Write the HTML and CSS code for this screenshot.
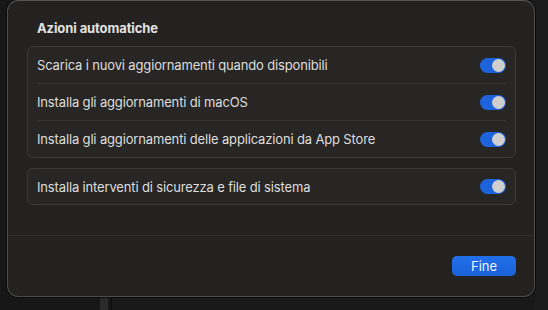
FILE: index.html
```html
<!DOCTYPE html>
<html lang="it">
<head>
<meta charset="utf-8">
<title>Azioni automatiche</title>
<link rel="stylesheet" href="styles.css">
</head>
<body>
<div class="sheet">
  <div class="content">
    <h1 class="title">Azioni automatiche</h1>
    <div class="group">
      <div class="row">
        <span class="label">Scarica i nuovi aggiornamenti quando disponibili</span>
        <span class="toggle on"><span class="knob"></span></span>
      </div>
      <div class="row">
        <span class="label">Installa gli aggiornamenti di macOS</span>
        <span class="toggle on"><span class="knob"></span></span>
      </div>
      <div class="row">
        <span class="label">Installa gli aggiornamenti delle applicazioni da App Store</span>
        <span class="toggle on"><span class="knob"></span></span>
      </div>
    </div>
    <div class="group">
      <div class="row">
        <span class="label">Installa interventi di sicurezza e file di sistema</span>
        <span class="toggle on"><span class="knob"></span></span>
      </div>
    </div>
  </div>
  <div class="footer">
    <button class="btn-primary">Fine</button>
  </div>
</div>
</body>
</html>
```

FILE: styles.css
```css
html, body {
  margin: 0;
  padding: 0;
}
body {
  width: 548px;
  height: 310px;
  overflow: hidden;
  background: linear-gradient(to right, #171717 0 100px, #2a2a2a 100px 108px, #171717 108px 111px, #0c0c0c 111px 112px, #191919 112px 535px, #1b1b1b 535px);
  font-family: "Inter", "Liberation Sans", sans-serif;
  -webkit-font-smoothing: antialiased;
}
.sheet {
  margin-left: 7px;
  width: 528px;
  height: 297px;
  box-sizing: border-box;
  background: #232220;
  border: 1px solid #4e4d4c;
  border-top-color: #555453;
  border-radius: 11px;
  box-shadow: 0 0 0 1px #0a0a0a;
  display: flex;
  flex-direction: column;
}
.content {
  padding: 19px 18px 0 19px;
  height: 235px;
  box-sizing: border-box;
  border-bottom: 1px solid #2f2e2d;
  display: flex;
  flex-direction: column;
  gap: 10px;
}
.title {
  margin: 0 0 0 10px;
  font-size: 13px;
  line-height: 16px;
  font-weight: 700;
  color: #e2e2e2;
  letter-spacing: -0.1px;
}
.group {
  background: #272624;
  border: 1px solid #3c3b3a;
  border-radius: 6px;
}
.row {
  height: 36px;
  margin: 0 9px;
  display: flex;
  align-items: center;
  justify-content: space-between;
  border-bottom: 1px solid #363533;
}
.row:last-child {
  border-bottom: none;
}
.group:last-child .row {
  height: 35px;
}
.label {
  font-size: 13px;
  color: #dedede;
  letter-spacing: -0.15px;
}
.toggle {
  width: 26px;
  height: 15px;
  border-radius: 8px;
  background: #1d64dc;
  display: flex;
  align-items: center;
  justify-content: flex-end;
  padding: 0 1px;
  box-sizing: border-box;
}
.knob {
  width: 13px;
  height: 13px;
  border-radius: 50%;
  background: #cfcfcf;
}
.footer {
  flex: 1;
  display: flex;
  justify-content: flex-end;
  align-items: flex-start;
  padding: 20px 18px 0 0;
}
.btn-primary {
  width: 64px;
  height: 20px;
  border: none;
  border-radius: 5px;
  background: linear-gradient(#2170ea, #1a62d8);
  color: #eef2fb;
  font-family: "Inter", "Liberation Sans", sans-serif;
  font-size: 13px;
  padding: 0;
  line-height: 20px;
}
```
